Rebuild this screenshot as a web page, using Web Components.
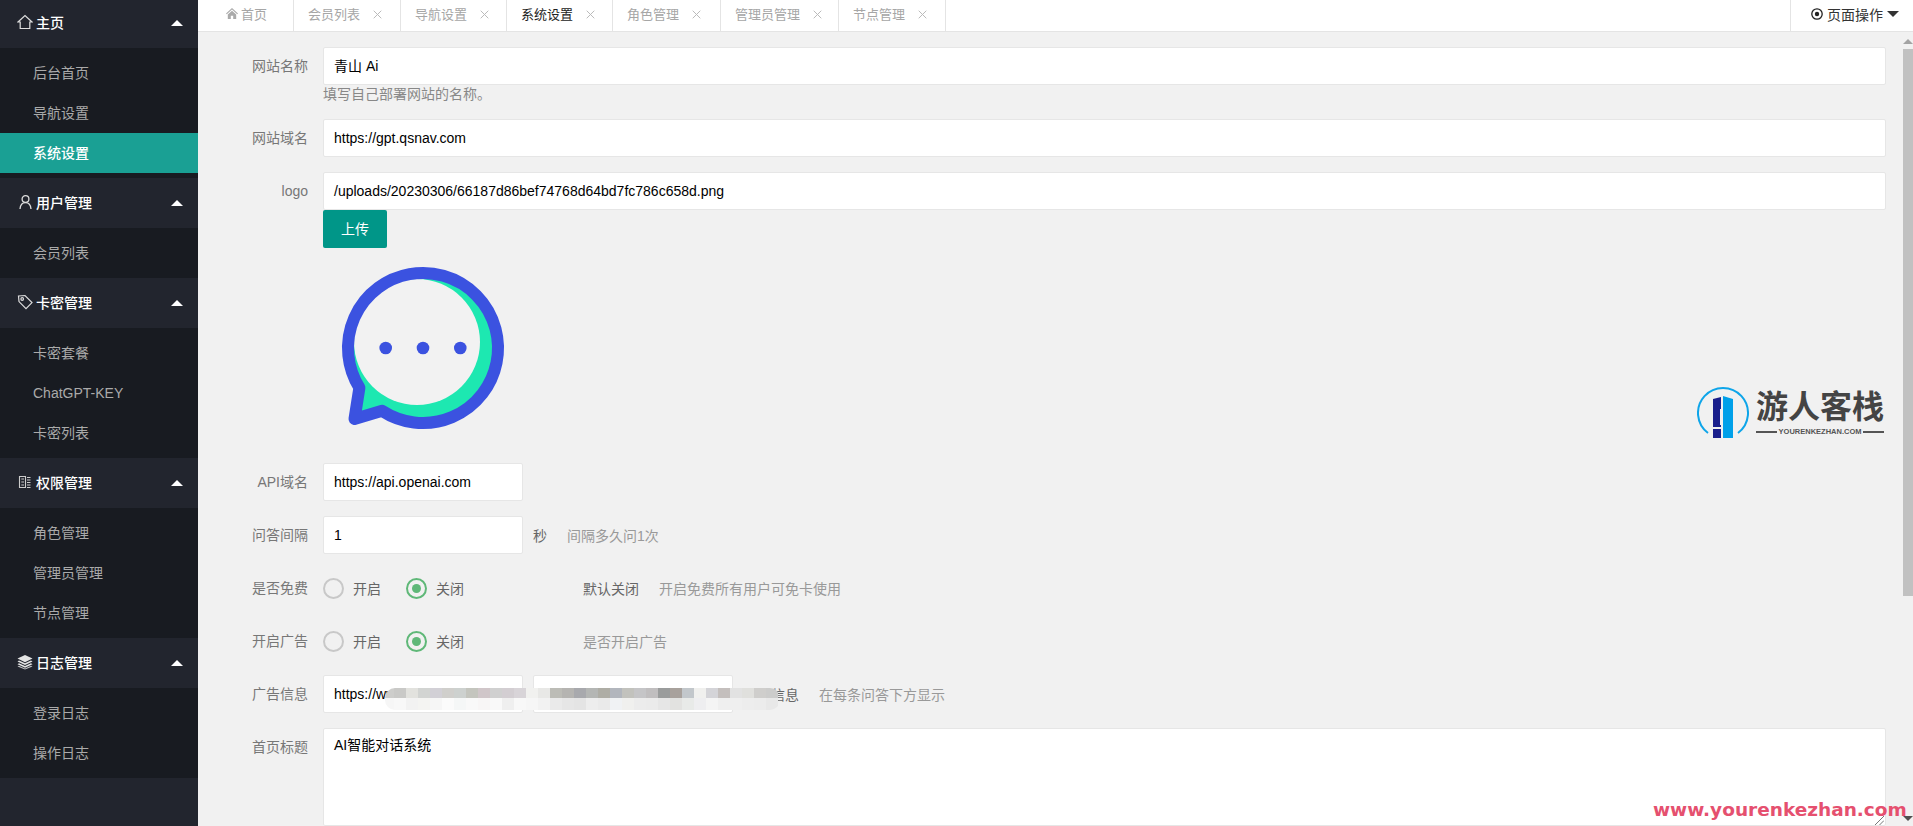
<!DOCTYPE html>
<html lang="zh-CN">
<head>
<meta charset="utf-8">
<title>系统设置</title>
<style>
    html, body { margin: 0; height: 100%; overflow: hidden; }
    body {
        font-family: "Liberation Sans", "Noto Sans CJK SC", sans-serif;
        font-size: 14px;
        color: #666;
        background: #f1f1f1;
    }
    svg { display: block; }
</style>
</head>
<body>
<app-shell>
    <admin-sidebar slot="side">
        <nav-group>
            <svg slot="icon" width="16" height="16" viewBox="0 0 16 16" fill="none" stroke="#ddd" stroke-width="1.2"><path d="M1 8 8 1.5 15 8H12.8V14.5H3.2V8Z"/></svg>
            <span slot="label">主页</span>
            <nav-item>后台首页</nav-item>
            <nav-item>导航设置</nav-item>
            <nav-item active>系统设置</nav-item>
        </nav-group>
        <nav-group>
            <svg slot="icon" width="16" height="16" viewBox="0 0 16 16" fill="none" stroke="#ddd" stroke-width="1.3"><circle cx="8.5" cy="5" r="3.4"/><path d="M3 15C3.3 11 5.5 8.6 8.5 8.6S13.7 11 14 15"/></svg>
            <span slot="label">用户管理</span>
            <nav-item>会员列表</nav-item>
        </nav-group>
        <nav-group>
            <svg slot="icon" width="16" height="16" viewBox="0 0 16 16" fill="none" stroke="#ddd" stroke-width="1.2"><path d="M1.5 2 8 1.5 15 8.6 9 14.6 2 7.6Z"/><circle cx="5.2" cy="5" r="1.3"/></svg>
            <span slot="label">卡密管理</span>
            <nav-item>卡密套餐</nav-item>
            <nav-item>ChatGPT-KEY</nav-item>
            <nav-item>卡密列表</nav-item>
        </nav-group>
        <nav-group>
            <svg slot="icon" width="16" height="16" viewBox="0 0 16 16" fill="none" stroke="#ccc" stroke-width="1.1"><path d="M2.5 2.5H8.5V13.5H2.5Z"/><path d="M4.3 5H7M4.3 8H7M4.3 11H7M10 3.5H13.5M10 6H13.5M10 8.5H13.5M10 11H13.5M10 13.5H13.5"/></svg>
            <span slot="label">权限管理</span>
            <nav-item>角色管理</nav-item>
            <nav-item>管理员管理</nav-item>
            <nav-item>节点管理</nav-item>
        </nav-group>
        <nav-group>
            <svg slot="icon" width="16" height="16" viewBox="0 0 16 16" fill="#e4e4e4"><path d="M8 1 15.5 4.6 8 8.2.5 4.6Z"/><path d="M2 6.5 8 9.3 14 6.5 15.5 7.4 8 11 .5 7.4Z"/><path d="M2 9.3 8 12.1 14 9.3 15.5 10.2 8 13.8 .5 10.2Z"/><path d="M2 11.8 8 14.6 14 11.8 15.5 12.6 8 15.6 .5 12.6Z" opacity=".8"/></svg>
            <span slot="label">日志管理</span>
            <nav-item>登录日志</nav-item>
            <nav-item>操作日志</nav-item>
        </nav-group>
    </admin-sidebar>

    <tab-bar slot="tabs">
        <tab-item home style="width:96px">首页</tab-item>
        <tab-item closable style="width:107px">会员列表</tab-item>
        <tab-item closable style="width:106px">导航设置</tab-item>
        <tab-item closable current style="width:106px">系统设置</tab-item>
        <tab-item closable style="width:108px">角色管理</tab-item>
        <tab-item closable style="width:118px">管理员管理</tab-item>
        <tab-item closable style="width:107px">节点管理</tab-item>
        <page-actions slot="end">页面操作</page-actions>
    </tab-bar>

    <settings-form slot="content">
        <form-row>
            <span slot="label">网站名称</span>
            <text-field>青山 Ai</text-field>
            <help-line>填写自己部署网站的名称。</help-line>
        </form-row>
        <form-row>
            <span slot="label">网站域名</span>
            <text-field>https://gpt.qsnav.com</text-field>
        </form-row>
        <form-row>
            <span slot="label">logo</span>
            <text-field>/uploads/20230306/66187d86bef74768d64bd7fc786c658d.png</text-field>
            <upload-button>上传</upload-button>
            <chat-logo></chat-logo>
        </form-row>
        <form-row>
            <span slot="label">API域名</span>
            <text-field short>https://api.openai.com</text-field>
        </form-row>
        <form-row>
            <span slot="label">问答间隔</span>
            <field-line>
                <text-field short>1</text-field>
                <span style="margin-left:10px;">秒</span>
                <span style="margin-left:20px;color:#999;">间隔多久问1次</span>
            </field-line>
        </form-row>
        <form-row>
            <span slot="label">是否免费</span>
            <field-line>
                <radio-option>开启</radio-option>
                <radio-option checked>关闭</radio-option>
                <span style="margin-left:94px;">默认关闭</span>
                <span style="margin-left:20px;color:#999;">开启免费所有用户可免卡使用</span>
            </field-line>
        </form-row>
        <form-row>
            <span slot="label">开启广告</span>
            <field-line>
                <radio-option>开启</radio-option>
                <radio-option checked>关闭</radio-option>
                <span style="margin-left:94px;color:#999;">是否开启广告</span>
            </field-line>
        </form-row>
        <form-row>
            <span slot="label">广告信息</span>
            <field-line>
                <text-field short>https://www</text-field>
                <text-field short style="margin-left:10px;"></text-field>
                <span style="margin-left:10px;">广告信息</span>
                <span style="margin-left:20px;color:#999;">在每条问答下方显示</span>
            </field-line>
        </form-row>
        <form-row>
            <span slot="label">首页标题</span>
            <text-area>AI智能对话系统</text-area>
        </form-row>
    </settings-form>

    <scroll-rail slot="rail"></scroll-rail>
</app-shell>

<mosaic-patch></mosaic-patch>
<brand-mark></brand-mark>
<site-stamp>www.yourenkezhan.com</site-stamp>

<script>
    // every element is just a template in an open shadow root
    function register(name, html) {
        const template = document.createElement("template");
        template.innerHTML = html;
        customElements.define(name, class extends HTMLElement {
            constructor() {
                super();
                this.attachShadow({ mode: "open" });
                this.shadowRoot.appendChild(template.content.cloneNode(true));
            }
        });
    }

    register("app-shell", `
        <style>
            :host { display: flex; height: 826px; overflow: hidden; }
            .main { flex: 1; min-width: 0; display: flex; flex-direction: column; }
            .body { flex: 1; min-height: 0; display: flex; }
        </style>
        <slot name="side"></slot>
        <div class="main">
            <slot name="tabs"></slot>
            <div class="body">
                <slot name="content"></slot>
                <slot name="rail"></slot>
            </div>
        </div>
    `);

    register("admin-sidebar", `
        <style>
            :host { display: block; flex: none; width: 198px; background: #22252e; overflow: hidden; }
            .list { margin-top: -2px; }
        </style>
        <div class="list"><slot></slot></div>
    `);

    register("nav-group", `
        <style>
            :host { display: block; }
            .head {
                display: flex;
                align-items: center;
                gap: 3px;
                box-sizing: border-box;
                height: 50px;
                padding: 0 15px 2px 17px;
                color: #fff;
                font-weight: 500;
            }
            .icon { width: 16px; height: 16px; flex: none; }
            .arrow {
                margin-left: auto;
                margin-top: 2px;
                width: 0;
                height: 0;
                border: 6px solid transparent;
                border-top: 0;
                border-bottom-color: #fff;
            }
            .items { padding: 5px 0; background: #181b21; }
        </style>
        <div class="head">
            <span class="icon"><slot name="icon"></slot></span>
            <slot name="label"></slot>
            <span class="arrow"></span>
        </div>
        <div class="items"><slot></slot></div>
    `);

    register("nav-item", `
        <style>
            :host { display: block; height: 40px; line-height: 40px; padding-left: 33px; color: #aaa; }
            :host([active]) { background: #1aa094; color: #fff; font-weight: 500; }
        </style>
        <slot></slot>
    `);

    register("tab-bar", `
        <style>
            :host {
                display: flex;
                flex: none;
                height: 31px;
                background: #fff;
                border-bottom: 1px solid #e4e4e4;
            }
            .end { margin-left: auto; display: flex; }
        </style>
        <slot></slot>
        <div class="end"><slot name="end"></slot></div>
    `);

    customElements.define("tab-item", class extends HTMLElement {
        constructor() {
            super();
            this.attachShadow({ mode: "open" });
            const home = this.hasAttribute("home");
            const closable = this.hasAttribute("closable");
            this.shadowRoot.innerHTML = `
                <style>
                    :host {
                        display: flex;
                        align-items: center;
                        box-sizing: border-box;
                        height: 31px;
                        padding: 0 0 4px ${home ? 28 : 14}px;
                        border-right: 1px solid #e4e4e4;
                        font-size: 13px;
                        color: #a6a6a6;
                        white-space: nowrap;
                    }
                    :host([current]) { color: #222; }
                    svg { flex: none; }
                    .home { margin-right: 3px; }
                    .close { margin: 2px 0 0 13px; }
                </style>
                ${home ? `<svg class="home" width="12" height="11" viewBox="0 0 12 11" fill="#aaa"><path d="M6 0 12 5.4 11.2 6.2 6 1.6.8 6.2 0 5.4Z"/><path d="M1.8 6.4 6 2.8 10.2 6.4V11H7.2V7.8H4.8V11H1.8Z"/></svg>` : ""}
                <slot></slot>
                ${closable ? `<svg class="close" width="9" height="9" viewBox="0 0 9 9" stroke="#bbb" stroke-width="1"><path d="M.7.7 8.3 8.3M8.3.7.7 8.3"/></svg>` : ""}
            `;
        }
    });

    register("page-actions", `
        <style>
            :host {
                display: flex;
                align-items: center;
                box-sizing: border-box;
                width: 123px;
                height: 31px;
                padding: 0 0 4px 20px;
                border-left: 1px solid #e4e4e4;
                color: #333;
            }
            svg { margin-right: 4px; }
            .caret {
                margin-left: 4px;
                width: 0;
                height: 0;
                border: 6px solid transparent;
                border-bottom: 0;
                border-top-color: #333;
            }
        </style>
        <svg width="12" height="12" viewBox="0 0 12 12" fill="none" stroke="#222" stroke-width="1.3"><circle cx="6" cy="6" r="5.2"/><circle cx="6" cy="6" r="2.2" fill="#222" stroke="none"/></svg>
        <slot></slot>
        <span class="caret"></span>
    `);

    register("settings-form", `
        <style>
            :host {
                display: block;
                flex: 1;
                min-width: 0;
                box-sizing: border-box;
                padding: 15px 17px 0 0;
                overflow: hidden;
            }
        </style>
        <slot></slot>
    `);

    register("form-row", `
        <style>
            :host {
                display: grid;
                grid-template-columns: 125px minmax(0, 1fr);
                margin-bottom: 15px;
            }
            .label { box-sizing: border-box; padding-right: 15px; text-align: right; line-height: 38px; color: #777; }
        </style>
        <div class="label"><slot name="label"></slot></div>
        <div><slot></slot></div>
    `);

    register("field-line", `
        <style>
            :host { display: flex; align-items: center; height: 38px; white-space: nowrap; }
        </style>
        <slot></slot>
    `);

    register("text-field", `
        <style>
            :host {
                display: block;
                box-sizing: border-box;
                height: 38px;
                padding: 0 10px;
                line-height: 36px;
                color: #000;
                background: #fff;
                border: 1px solid #e6e6e6;
                border-radius: 2px;
                overflow: hidden;
                white-space: nowrap;
            }
            :host([short]) { width: 200px; flex: none; }
        </style>
        <slot></slot>
    `);

    register("text-area", `
        <style>
            :host {
                display: block;
                position: relative;
                box-sizing: border-box;
                height: 98px;
                padding: 6px 10px;
                line-height: 20px;
                color: #000;
                background: #fff;
                border: 1px solid #e6e6e6;
                border-radius: 2px;
            }
            svg { position: absolute; right: 1px; bottom: 0; }
        </style>
        <slot></slot>
        <svg width="9" height="9" viewBox="0 0 9 9" stroke="#777" stroke-width="1"><path d="M0 9 9 0M4.5 9 9 4.5"/></svg>
    `);

    register("help-line", `
        <style>
            :host { display: block; height: 19px; line-height: 19px; color: #888; }
        </style>
        <slot></slot>
    `);

    register("upload-button", `
        <style>
            :host {
                display: block;
                width: 64px;
                height: 38px;
                line-height: 38px;
                text-align: center;
                color: #fff;
                background: #009688;
                border-radius: 2px;
            }
        </style>
        <slot></slot>
    `);

    register("chat-logo", `
        <style>
            :host { display: block; width: 200px; height: 200px; }
        </style>
        <svg width="200" height="200" viewBox="0 0 200 200">
            <path fill="#1de8b1" d="M36.4 139.75 31.5 171 59.1 162.86A75 75 0 1 0 36.4 139.75Z"/>
            <circle cx="94" cy="94" r="63" fill="#f2f2f2"/>
            <path fill="none" stroke="#3b52e0" stroke-width="12" stroke-linejoin="round" d="M36.4 139.75 31.5 171 59.1 162.86A75 75 0 1 0 36.4 139.75Z"/>
            <g fill="#3b52e0">
                <circle cx="62.7" cy="100" r="6.3"/>
                <circle cx="100" cy="100" r="6.3"/>
                <circle cx="137.3" cy="100" r="6.3"/>
            </g>
        </svg>
    `);

    register("radio-option", `
        <style>
            :host {
                display: flex;
                align-items: center;
                flex: none;
                width: 83px;
                color: #666;
            }
            .dot {
                box-sizing: border-box;
                width: 21px;
                height: 21px;
                margin-right: 9px;
                border: 2px solid #c8c8c8;
                border-radius: 50%;
                display: flex;
                align-items: center;
                justify-content: center;
            }
            :host([checked]) .dot { border-color: #5fb878; }
            :host([checked]) .dot::after {
                content: "";
                width: 9px;
                height: 9px;
                border-radius: 50%;
                background: #5fb878;
            }
        </style>
        <span class="dot"></span>
        <slot></slot>
    `);

    register("scroll-rail", `
        <style>
            :host {
                display: flex;
                flex-direction: column;
                align-items: center;
                flex: none;
                width: 10px;
                background: #f1f1f1;
                overflow: hidden;
            }
            .up, .down { width: 0; height: 0; border: 5px solid transparent; }
            .up { margin-top: 7px; border-top: 0; border-bottom-color: #a3a3a3; }
            .thumb { align-self: stretch; height: 547px; margin-top: 5px; background: #c1c1c1; }
            .down { margin-top: auto; margin-bottom: 5px; border-bottom: 0; border-top-color: #505050; }
        </style>
        <span class="up"></span>
        <span class="thumb"></span>
        <span class="down"></span>
    `);

    // blurred band lying over the ad fields in the original screenshot
    const mosaicTop = "c9c9c7 e2e2de d2d4d2 d2d0d6 d0cfcc cdd1cf c4c5be d0c6c9 d0d0d0 d3ced2 d8d4d8 f1f1ef e8e8e6 bcbcb6 b5b4b1 a8a9ad b4b6b4 aeada5 b2b6bd c2c2bd c5c5c7 c0bebf 9a9c9c a8a19c c2c7cb f0f0ee d4d4d8 c4bfbd e2e2e2 e0e0dd cfcecc cccccb".split(" ");
    const mosaicLow = "f8f8f8 f2f2f2 f4f4f2 f6f6f6 fbfbfb f5f7f7 f9f9f9 f8f6f6 f9f9f9 efefef f8f8f8 f6f6f6 f2f2f2 eaeaea e6e6e6 e4e4e4 ededed eaeaea f0f2f4 f0f0ee ececec ebebeb e6e6e6 e2e2e0 e8eae8 eeeef0 f4f4f4 efefef efefef ededed ececec e8e8e8".split(" ");
    const mosaicCell = c => `<i style="background:#${c}"></i>`;
    register("mosaic-patch", `
        <style>
            :host {
                position: absolute;
                left: 385px;
                top: 688px;
                width: 395px;
                height: 22px;
                display: grid;
                grid-template-columns: 9px repeat(32, 12px);
                grid-template-rows: 10px 12px;
                border-radius: 10px;
                overflow: hidden;
            }
        </style>
        ${mosaicCell("cdcdcb")}${mosaicTop.map(mosaicCell).join("")}
        ${mosaicCell("f6f6f6")}${mosaicLow.map(mosaicCell).join("")}
    `);

    register("brand-mark", `
        <style>
            :host {
                position: absolute;
                left: 1697px;
                top: 387px;
                width: 190px;
                height: 52px;
                display: flex;
                gap: 7px;
            }
            svg { flex: none; }
            .words { width: 128px; color: #444; }
            .name {
                font-size: 32px;
                line-height: 40px;
                font-weight: 700;
                white-space: nowrap;
            }
            .sub {
                display: flex;
                align-items: center;
                gap: 2px;
                font-size: 7.5px;
                line-height: 10px;
                font-weight: 700;
                color: #555;
                white-space: nowrap;
            }
            .sub::before, .sub::after { content: ""; flex: 1; height: 1.5px; background: #555; }
        </style>
        <svg width="52" height="52" viewBox="0 0 52 52">
            <path fill="none" stroke="#0ea5e9" stroke-width="2" d="M11 46A25 25 0 1 1 41 46"/>
            <path fill="#1a1f8c" d="M16 12 24 10V51H16Z"/>
            <path fill="#00a0e9" d="M26 9 36 12V51H26Z"/>
            <path fill="#f1f1f1" d="M16 40H25V42H16Z"/>
            <path fill="#f1f1f1" d="M23 22H26V38H23Z"/>
        </svg>
        <div class="words">
            <div class="name">游人客栈</div>
            <div class="sub">YOURENKEZHAN.COM</div>
        </div>
    `);

    register("site-stamp", `
        <style>
            :host {
                position: absolute;
                left: 1653px;
                top: 797px;
                font-family: "DejaVu Sans", sans-serif;
                font-size: 18.5px;
                line-height: 26px;
                font-weight: 700;
                color: #e5506f;
                white-space: nowrap;
            }
        </style>
        <slot></slot>
    `);
</script>
</body>
</html>
